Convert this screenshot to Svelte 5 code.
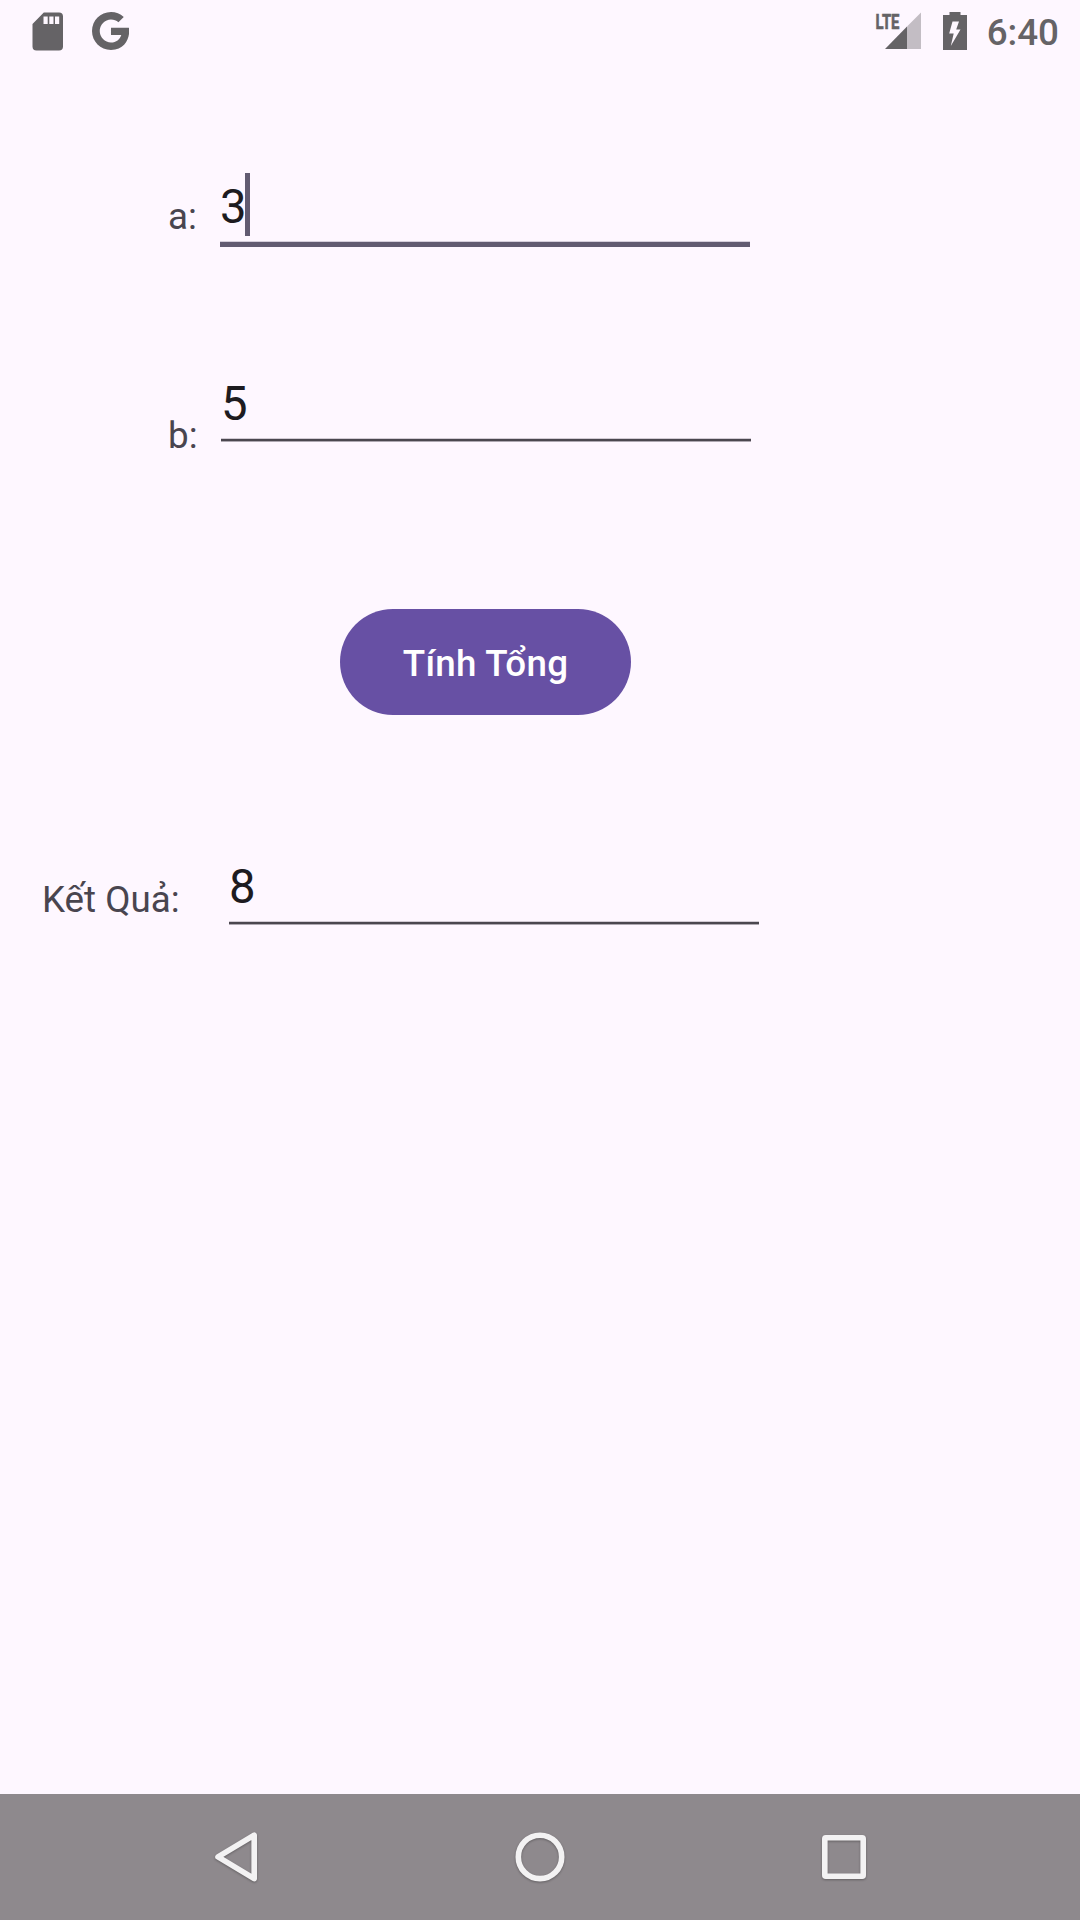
<script>
  let a = $state(3);
  let b = $state(5);
  let result = $state(8);

  function sum() {
    result = a + b;
  }
</script>

<div class="screen">
  <header class="status">
    <svg class="sd" width="32" height="39" viewBox="0 0 32 39">
      <path fill-rule="evenodd" d="M11.8 .4H27a4 4 0 0 1 4 4V34.500a4 4 0 0 1-4 4H4.500a4 4 0 0 1-4-4V12zM11.500 4.500v7.500h4.200V4.500zm5.800 0v7.500h4.200V4.500zm5.700 0v7.500h4.200V4.500z" />
    </svg>
    <svg class="google" width="37" height="38" viewBox="2.543 2 19.5 20">
      <path d="M12.545 10.239v3.821h5.445c-.712 2.315-2.647 3.972-5.445 3.972a6.033 6.033 0 0 1 0-12.064c1.498 0 2.866.549 3.921 1.453l2.814-2.814A9.969 9.969 0 0 0 12.545 2C7.021 2 2.543 6.477 2.543 12s4.478 10 10.002 10c8.396 0 10.249-7.85 9.426-11.748z" />
    </svg>
    <svg class="signal" width="47" height="38" viewBox="-1 0 47 38">
      <path class="weak" d="M32 14.500L46 .5V37H32z" />
      <path d="M10 37L32 14.500V37z" />
      <text x="0.500" y="16.700" textLength="24" lengthAdjust="spacingAndGlyphs">LTE</text>
    </svg>
    <svg class="battery" width="24" height="38" viewBox="0 0 24 38">
      <path fill-rule="evenodd" d="M6.500 0h11v3H24v35H0V3h6.500zM9.500 9.500L6.200 21.500h4.500L7.800 34 17.500 17.500h-4.300L16 9.500z" />
    </svg>
    <span class="time">6:40</span>
  </header>

  <main>
    <div class="row first">
      <span class="label">a:</span>
      <div class="field focused"><span class="value">{a}<i class="caret"></i></span></div>
    </div>
    <div class="row second">
      <span class="label">b:</span>
      <div class="field"><span class="value">{b}</span></div>
    </div>
    <button onclick={sum}>Tính Tổng</button>
    <div class="row result">
      <span class="label">Kết Quả:</span>
      <div class="field"><span class="value">{result}</span></div>
    </div>
  </main>

  <nav>
    <svg width="60" height="60" viewBox="0 0 60 60">
      <path d="M47.200 8.200V51.600L11 29.900z" />
    </svg>
    <svg width="60" height="60" viewBox="0 0 60 60">
      <circle cx="30" cy="29.900" r="21.700" />
    </svg>
    <svg width="60" height="60" viewBox="0 0 60 60">
      <rect x="11.800" y="10.800" width="38.400" height="38.400" rx="1" />
    </svg>
  </nav>
</div>

<style>
  :global(body) {
    margin: 0;
    background: #fef7ff;
  }

  .screen {
    width: 1080px;
    height: 1920px;
    display: flex;
    flex-direction: column;
    background: #fef7ff;
    font-family: Roboto, sans-serif;
    overflow: hidden;
  }

  .status {
    height: 63px;
    box-sizing: border-box;
    padding: 12px 21px 0 32px;
    display: flex;
    align-items: flex-start;
    fill: #656366;
    color: #656366;
  }

  .google {
    margin-left: 28px;
  }

  .signal {
    margin-left: auto;
    overflow: visible;
  }

  .signal text {
    font: 700 21px Roboto, sans-serif;
    stroke: #656366;
    stroke-width: .6px;
  }

  .weak {
    fill: #c3bdc4;
  }

  .battery {
    margin-left: 22px;
  }

  .time {
    margin-left: 20px;
    font-size: 36.750px;
    font-weight: 500;
    line-height: 42px;
  }

  main {
    flex: 1;
    display: flex;
    flex-direction: column;
    align-items: flex-start;
  }

  .row {
    display: flex;
    align-items: flex-start;
  }

  .label {
    box-sizing: border-box;
    font-size: 36.750px;
    line-height: 50px;
    color: #49454f;
    white-space: nowrap;
  }

  .field {
    box-sizing: border-box;
    width: 530px;
    padding-top: 1px;
    border-bottom: 2px solid #4b474f;
    box-shadow: 0 1px #aea8b1, inset 0 -1px #d2cbd4;
    font-size: 47.250px;
    line-height: 63px;
    color: #1d1b20;
  }

  .value {
    position: relative;
    display: block;
    width: max-content;
  }

  .focused {
    border-bottom: 5px solid #625b71;
    box-shadow: inset 0 -1px #d5cedb;
  }

  .caret {
    position: absolute;
    left: 25px;
    top: -3px;
    width: 5px;
    height: 63px;
    background: #625b71;
  }

  .first {
    padding: 112px 0 0 168px;
  }

  .first .label {
    width: 52px;
    padding-top: 17px;
  }

  .first .field {
    height: 72px;
  }

  .second {
    padding: 125px 0 0 168px;
  }

  .second .label {
    width: 53px;
    padding-top: 39px;
  }

  .second .field {
    height: 69px;
  }

  button {
    width: 291px;
    height: 106px;
    margin: 148px 0 0 340px;
    padding: 2px 0 0;
    border: 0;
    border-radius: 53px;
    background: #6750a4;
    color: #fff;
    font: 500 36.750px Roboto, sans-serif;
    letter-spacing: .25px;
  }

  .result {
    padding: 140px 0 0 42px;
  }

  .result .label {
    width: 187px;
    padding-top: 20px;
  }

  .result .field {
    height: 69px;
  }

  nav {
    height: 126px;
    display: flex;
    justify-content: center;
    align-items: center;
    gap: 243px;
    background: #8e898d;
  }

  nav svg {
    fill: none;
    stroke: #f3f2f3;
    stroke-width: 5.600;
    stroke-linejoin: round;
    filter: drop-shadow(0 1px 1px rgb(0 0 0 / .3));
  }
</style>
